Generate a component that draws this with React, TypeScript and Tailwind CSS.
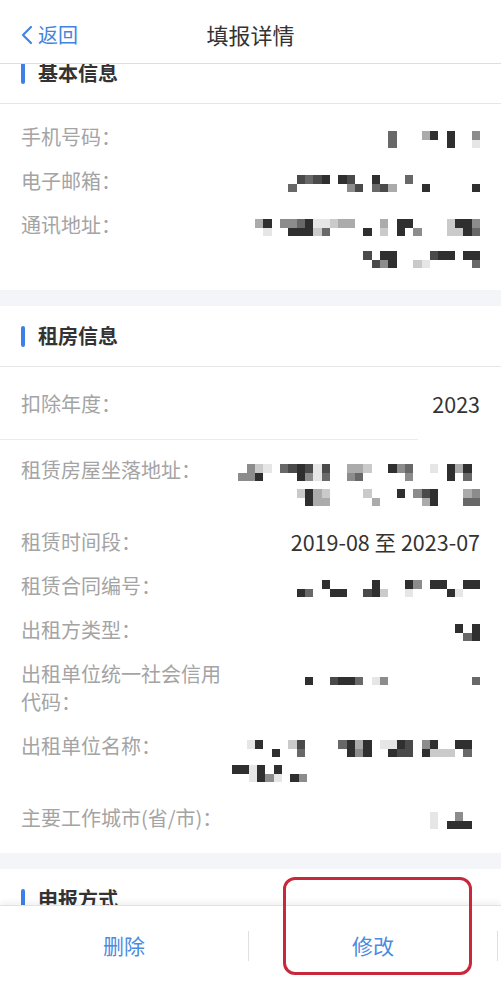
const shade: Record<string, string> = {
  "1": "bg-[#2f2f2f]",
  "2": "bg-[#4a4a4a]",
  "3": "bg-[#686868]",
  "4": "bg-[#8c8c8c]",
  "5": "bg-[#ababab]",
  "6": "bg-[#cacaca]",
  "7": "bg-[#e6e6e6]",
};

type Line = { top: string; bottom: string; className?: string };

type Item = {
  label: string;
  value?: string;
  lines?: Line[];
  wide?: boolean;
};

// redacted values are drawn as a blurred mosaic of grey cells
const Cells = ({ row }: { row: string }) => (
  <div className="flex h-[8.5px]">
    {row.split("").map((c, i) => (
      <span key={i} className={`h-[8.5px] w-[8.33px] ${shade[c] ?? ""}`} />
    ))}
  </div>
);

const Mosaic = ({ lines, wide }: { lines: Line[]; wide?: boolean }) => (
  <div
    className={`flex flex-1 flex-col items-end pt-[8px] ${wide ? "gap-[15px]" : "gap-2"} ${
      lines.length > 1 ? "h-[56px]" : "h-[28px]"
    }`}
  >
    {lines.map((line, i) => (
      <div key={i} className={`flex flex-col ${line.className ?? ""}`}>
        <Cells row={line.top} />
        <Cells row={line.bottom} />
      </div>
    ))}
  </div>
);

const Row = ({ item }: { item: Item }) => (
  <div className="flex items-start justify-between py-2">
    <span className="w-[205px] shrink-0 text-[20px] leading-[28px] text-[#a4a4a4]">{item.label}</span>
    {item.value ? (
      <span className="text-[21.5px] leading-[28px] text-[#333]">{item.value}</span>
    ) : (
      <Mosaic lines={item.lines ?? []} wide={item.wide} />
    )}
  </div>
);

const SectionHeader = ({ title }: { title: string }) => (
  <div className="flex h-[61px] shrink-0 items-center border-b border-[#e6e6e6] bg-white pl-[21px]">
    <span className="h-[21px] w-[4px] rounded-full bg-[#3f80e8]" />
    <span className="ml-[13px] text-[20px] font-bold text-[#333]">{title}</span>
  </div>
);

const basic: Item[] = [
  { label: "手机号码：", lines: [{ top: "3   51 1  4", bottom: "3      1  7" }] },
  { label: "电子邮箱：", lines: [{ top: " 2321 12  1   3        ", bottom: "3      42 325   1     1" }] },
  {
    label: "通讯地址：",
    wide: true,
    lines: [
      { top: "51 443177655   5 11    6114", bottom: " 7  11163    1 6 1 4   6613" },
      { top: "2 11    211 11", bottom: " 241  67     3" },
    ],
  },
];

const rent: Item[] = [
  {
    label: "租赁房屋坐落地址：",
    lines: [
      { top: " 467 321272  556  143  7 151 ", bottom: "441    1473  43     4    1 3 " },
      { top: "6156    6   1 421   54", bottom: " 155     5     51   33" },
    ],
  },
  { label: "租赁时间段：", value: "2019-08 至 2023-07" },
  { label: "租赁合同编号：", lines: [{ top: "   1     1   14 11  11", bottom: "13  11  216  7    17  " }] },
  { label: "出租方类型：", lines: [{ top: "1 1", bottom: " 31" }] },
  { label: "出租单位统一社会信用代码：", lines: [{ top: "", bottom: "1  2113 74          3" }] },
  {
    label: "出租单位名称：",
    lines: [
      { top: "71   62    3151 7712 41  11 ", bottom: "   1  3     141  122 1666 3 " },
      { top: "1171 1   ", bottom: "  7147 14", className: "self-start ml-[6px]" },
    ],
  },
  { label: "主要工作城市(省/市)：", lines: [{ top: "7  4  ", bottom: "7 111 " }] },
];

const App = () => {
  return (
    <div className="relative flex h-[992px] w-full flex-col overflow-hidden bg-white font-['Noto_Sans_CJK_SC','Noto_Sans',sans-serif]">
      <header className="grid h-[64px] shrink-0 grid-cols-[1fr_auto_1fr] items-center border-b border-[#dedede] bg-white pt-[6px]">
        <button className="flex items-center pl-[20px] text-[20px] text-[#4285e0]">
          <svg width="13" height="20" viewBox="0 0 13 20" fill="none">
            <polyline points="11,2 3,10 11,18" stroke="#4285e0" strokeWidth="2.2" strokeLinecap="round" strokeLinejoin="round" />
          </svg>
          <span className="ml-[5px]">返回</span>
        </button>
        <h1 className="text-[22px] text-[#333]">填报详情</h1>
        <div />
      </header>

      <main className="flex flex-1 flex-col overflow-hidden bg-[#f4f5f9]">
        <div className="mt-[-21px] flex flex-col">
          <SectionHeader title="基本信息" />
          <div className="bg-white px-[21px] pb-[15px] pt-[11px]">
            {basic.map((item) => (
              <Row key={item.label} item={item} />
            ))}
          </div>

          <div className="h-4" />

          <SectionHeader title="租房信息" />
          <div className="bg-white pb-[13px] pt-[15px]">
            <div className="px-[21px]">
              <Row item={{ label: "扣除年度：", value: "2023" }} />
            </div>
            <div className="mt-[13px] h-px w-[418px] bg-[#ececec]" />
            <div className="px-[21px] pt-[8px]">
              {rent.map((item) => (
                <Row key={item.label} item={item} />
              ))}
            </div>
          </div>

          <div className="h-4" />

          <SectionHeader title="申报方式" />
        </div>
      </main>

      <footer className="flex h-[87px] shrink-0 border-t border-[#e2e2e2] bg-white pb-[7px] shadow-[0_-3px_6px_rgba(0,0,0,0.06)]">
        {["删除", "修改"].map((label) => (
          <div key={label} className="flex w-[249px] shrink-0 items-center">
            <button className="flex-1 text-[21px] text-[#4a8be0]">{label}</button>
            <span className="h-[30px] w-px bg-[#e0e0e0]" />
          </div>
        ))}
      </footer>

      <div className="absolute left-[283px] top-[877px] h-[98px] w-[189px] rounded-[12px] border-[3px] border-[#c7283a]" />
    </div>
  );
};

export default App;
